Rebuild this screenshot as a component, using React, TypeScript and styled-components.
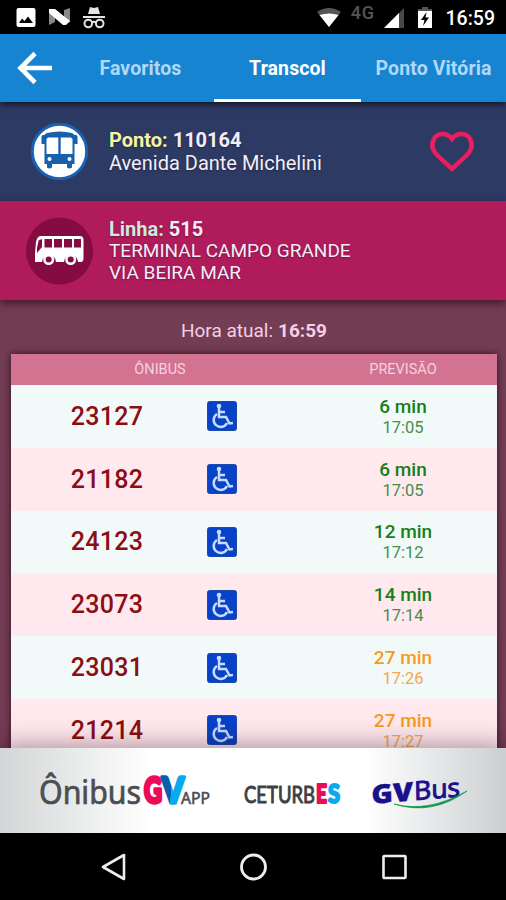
import React from 'react';
import styled, { createGlobalStyle } from 'styled-components';

const Global = createGlobalStyle`
  * { box-sizing: border-box; }
  body { margin: 0; background: #000; font-family: Roboto, sans-serif; overflow: hidden; }
  svg { display: block; flex: none; overflow: visible; }
`;

const Screen = styled.div`
  width: 506px;
  height: 900px;
  display: flex;
  flex-direction: column;
  overflow: hidden;
  background: #733d53;
`;

const StatusBar = styled.header`
  height: 34px;
  flex: none;
  background: #000;
  display: flex;
  align-items: center;
  justify-content: space-between;
  padding: 0 11px 0 16px;
`;

const IconGroup = styled.div<{ $gap: number }>`
  display: flex;
  align-items: center;
  gap: ${(p) => p.$gap}px;
`;

const Network = styled.span`
  color: #555;
  font-size: 18px;
  line-height: 18px;
  font-weight: 500;
  letter-spacing: 0.6px;
  padding-bottom: 9px;
  margin-left: 1px;
`;

const Battery = styled.svg`
  margin-left: 5px;
`;

const Clock = styled.span`
  color: #fff;
  font-size: 19.5px;
  font-weight: 500;
  margin-left: 5px;
  padding-top: 2px;
`;

const TabBar = styled.nav`
  height: 68px;
  flex: none;
  display: grid;
  grid-template-columns: 67px 147px 147px 145px;
  background: #1784d1;
  box-shadow: 0 2px 7px rgba(0, 0, 0, 0.75);
  z-index: 3;
`;

const BackButton = styled.button`
  border: 0;
  padding: 0 0 0 17px;
  background: none;
  display: flex;
  align-items: center;
`;

const Tab = styled.button<{ $active?: boolean }>`
  border: 0;
  border-bottom: 3px solid ${(p) => (p.$active ? '#fff' : 'transparent')};
  padding: 3px 0 0;
  background: none;
  font: 700 19.5px Roboto, sans-serif;
  letter-spacing: 0.1px;
  white-space: nowrap;
  color: ${(p) => (p.$active ? '#fff' : '#b0d8f8')};
`;

const Banner = styled.section<{ $tone: 'stop' | 'line' }>`
  height: 99px;
  flex: none;
  display: flex;
  align-items: center;
  padding: 0 32px 0 26px;
  background: ${(p) => (p.$tone === 'stop' ? '#2d3a64' : '#b01b5b')};
  box-shadow: ${(p) => (p.$tone === 'line' ? '0 3px 8px rgba(40, 10, 25, 0.75)' : 'none')};
  z-index: ${(p) => (p.$tone === 'line' ? 2 : 1)};
`;

const IconSlot = styled.div`
  width: 83px;
  flex: none;
`;

const BannerText = styled.div<{ $leading: number; $size: number }>`
  flex: 1;
  color: #f3edf8;
  font-size: ${(p) => p.$size}px;
  line-height: ${(p) => p.$leading}px;
  white-space: nowrap;
  text-shadow: 0 1px 2px rgba(0, 0, 0, 0.35);
`;

const BannerTitle = styled.div`
  font-weight: 700;
  font-size: 20px;
`;

const Label = styled.span<{ $color: string }>`
  color: ${(p) => p.$color};
`;

const Content = styled.main`
  flex: 1;
  min-height: 0;
  padding: 0 9px 0 11px;
  overflow: hidden;
`;

const CurrentTime = styled.div`
  height: 54px;
  padding: 7px 0 0;
  display: flex;
  align-items: center;
  justify-content: center;
  gap: 5px;
  color: #f5cfe4;
  font-size: 19px;
`;

const Table = styled.div`
  box-shadow: 0 0 7px rgba(25, 0, 10, 0.75);
`;

const HeaderRow = styled.div`
  height: 31px;
  display: grid;
  grid-template-columns: 298px 1fr;
  align-items: center;
  text-align: center;
  background: #d27391;
  color: #f8cfe0;
  font-size: 14.5px;
`;

const Row = styled.div`
  height: 62.8px;
  display: grid;
  grid-template-columns: 192px 106px 1fr;
  align-items: center;
  text-align: center;
  background: #f2faf9;
  &:nth-child(odd) { background: #ffe9ee; }
`;

const Vehicle = styled.span`
  color: #8c0d12;
  font-size: 25px;
  font-weight: 500;
  letter-spacing: 0.25px;
`;

const Center = styled.div`
  display: flex;
  padding-left: 4px;
`;

const Forecast = styled.div<{ $late: boolean }>`
  color: ${(p) => (p.$late ? '#f79a1d' : '#168018')};
  font-size: 16.5px;
  line-height: 21px;
  padding-top: 1px;
`;

const Minutes = styled.div`
  font-size: 19px;
  font-weight: 500;
`;

const Arrival = styled.div<{ $late: boolean }>`
  color: ${(p) => (p.$late ? '#f5a64a' : '#438e4c')};
`;

const Sponsors = styled.footer`
  height: 85px;
  flex: none;
  display: flex;
  align-items: center;
  padding-left: 38px;
  background: linear-gradient(90deg, #d3d5d6 0, #fff 150px, #fff 365px, #cccfd1 100%);
  box-shadow: 0 -2px 24px rgba(40, 0, 20, 0.42);
  z-index: 2;
`;

const NavBar = styled.nav`
  height: 67px;
  flex: none;
  background: #000;
  display: flex;
  align-items: center;
  padding-left: 100px;
  gap: 114px;
  z-index: 2;
`;

const StatusLeft = () => (
  <IconGroup $gap={12.5}>
    <svg width="20" height="20" viewBox="0 0 20 20">
      <rect x=".5" y="1" width="19" height="19" rx="2" fill="#fff" />
      <path d="M3 16L6 11.5L8.5 14L12 9.5L17 16Z" fill="#000" />
    </svg>
    <svg width="22" height="20" viewBox="0 0 22 20">
      <path d="M0 2L6 5V15L0 18ZM15 3L21 1V15L15 17Z" fill="#888" />
      <path d="M0 2H6L21 14L17 18H14L0 6Z" fill="#fff" />
    </svg>
    <svg width="22" height="22" viewBox="0 0 22 22" fill="none" stroke="#e4e4e4" strokeWidth="2">
      <path d="M5 8L7 1L11 2L15 1L17 8Z" fill="#e4e4e4" stroke="none" />
      <path d="M0 11H22" />
      <circle cx="5.3" cy="17.5" r="3.8" />
      <circle cx="16.7" cy="17.5" r="3.8" />
      <path d="M9 16.5Q11 15 13 16.5" />
    </svg>
  </IconGroup>
);

const StatusRight = () => (
  <IconGroup $gap={9}>
    <svg width="24" height="20" viewBox="0 0 24 20">
      <path d="M0 5Q12-3 24 5L12 20Z" fill="#555" />
      <path d="M2.500 8Q12 5 21.500 8L12 20Z" fill="#fff" />
    </svg>
    <Network>4G</Network>
    <svg width="20" height="20" viewBox="0 0 20 20">
      <path d="M0 21L20 1V21Z" fill="#484848" />
      <path d="M0 21L15 6V21Z" fill="#fff" />
    </svg>
    <Battery width="14" height="21" viewBox="0 0 14 21">
      <path d="M4 0H10V2H14V5H0V2H4Z" fill="#555" />
      <path d="M0 4H14V21H0Z" fill="#fff" />
      <path d="M8.500 5L3 13H6.500L5 19L11 10.500H7.500Z" fill="#000" />
    </Battery>
    <Clock>16:59</Clock>
  </IconGroup>
);

const BackArrow = () => (
  <svg width="35" height="32" viewBox="0 0 35 32" fill="none" stroke="#fff" strokeWidth="4.6">
    <path d="M18 1.5L3.5 16L18 30.5M3 16H35" />
  </svg>
);

const StopIcon = () => (
  <svg width="68" height="60" viewBox="0 0 68 60">
    <circle cx="33.5" cy="29.500" r="27.2" fill="#fff" stroke="#1763b2" strokeWidth="3" />
    <path d="M21 11Q33.500 8 46 11Q48 12 48.500 13H50.500Q52 14 51.500 17V22H48.500V42H46V45.500Q43.500 47.500 41 45.500V42H26V45.500Q23.500 47.500 21 45.500V42H18.500V22H15.500V17Q15 14 16.500 13H18.500Q19 12 21 11Z" fill="#1761ac" />
    <path d="M22 15.500H32.300V32H20.500V17ZM34.700 15.500H45L46.500 17V32H34.700Z" fill="#fff" />
    <circle cx="23.500" cy="37" r="2" fill="#fff" />
    <circle cx="43.500" cy="37" r="2" fill="#fff" />
  </svg>
);

const LineIcon = () => (
  <svg width="68" height="68" viewBox="0 0 68 68">
    <circle cx="33.500" cy="34" r="33.500" fill="#850b43" />
    <path d="M14 19H54Q57.500 19 57.500 23V42Q57 45 55 45H52A7 7 0 0 0 38 45H30A7 7 0 0 0 16 45H9V36L10 25Q11 20 14 19Z" fill="#fff" />
    <path d="M12.500 23.500L16 22V30L11 36V31ZM18.500 22H26V30.500H18.500ZM28 22H36V30.500H28ZM38 22H46V30.500H38ZM48 22H55V30.500H48Z" fill="#850b43" />
    <circle cx="22.700" cy="42.500" r="4.300" fill="#850b43" stroke="#fff" strokeWidth="2.500" />
    <circle cx="44.700" cy="42.500" r="4.300" fill="#850b43" stroke="#fff" strokeWidth="2.500" />
  </svg>
);

const Heart = () => (
  <svg width="44" height="40" viewBox="0 0 44 40" fill="none" stroke="#e91e5f" strokeWidth="4.500">
    <path d="M22 7C17 0 8 1 4.500 6C0 13 3 19 8 24L22 37L36 24C41 19 44 13 39.500 6C36 1 27 0 22 7Z" />
  </svg>
);

const Accessible = () => (
  <svg width="30" height="30" viewBox="0 0 30 30">
    <rect x=".5" y=".5" width="29" height="29" rx="2" fill="#0842c8" stroke="#1b4ba8" />
    <circle cx="12" cy="5" r="2.300" fill="#c8dcff" />
    <g fill="none" stroke="#c8dcff" strokeWidth="2.500">
      <path d="M12 6V16H19L22.500 22.500L26 22" />
      <path d="M12 11H18" />
      <path d="M10 13A7 7 0 1 0 20 22" />
    </g>
  </svg>
);

const AppLogo = () => (
  <svg width="174" height="48" viewBox="0 0 174 48">
    <defs>
      <linearGradient id="vee" x1="0" x2="1" y1="0" y2=".18">
        <stop offset=".5" stopColor="#075fae" />
        <stop offset=".51" stopColor="#08a9ef" />
      </linearGradient>
    </defs>
    <text x="1" y="37" textLength="102" lengthAdjust="spacingAndGlyphs" fontFamily="Noto Sans" fontSize="32" fill="#4b4e51" stroke="#4b4e51" strokeWidth=".7">Ônibus</text>
    <g fontFamily="Lato" fontWeight="900" fontSize="36" strokeWidth="3.600" strokeLinejoin="round">
      <text x="106" y="36" textLength="18" lengthAdjust="spacingAndGlyphs" fill="#ed0b58" stroke="#ed0b58">G</text>
      <text x="124" y="36" textLength="22" lengthAdjust="spacingAndGlyphs" fill="url(#vee)" stroke="url(#vee)">V</text>
    </g>
    <text x="143" y="37" textLength="29" lengthAdjust="spacingAndGlyphs" fontFamily="Noto Sans" fontSize="16" fill="#4b4e51" stroke="#4b4e51" strokeWidth=".6">APP</text>
  </svg>
);

const CeturbLogo = () => (
  <svg width="160" height="48" viewBox="0 0 160 48">
    <text x="32" y="36" textLength="71" lengthAdjust="spacingAndGlyphs" fontFamily="Lato" fontWeight="400" fontSize="23" fill="#3e4043" stroke="#3e4043" strokeWidth="1" strokeLinejoin="round">CETURB</text>
    <g fontFamily="Lato" fontWeight="900" fontSize="26" strokeWidth="2" strokeLinejoin="round">
      <text x="104" y="36" textLength="11" lengthAdjust="spacingAndGlyphs" fill="#ed0b58" stroke="#ed0b58">E</text>
      <text x="116" y="36" textLength="12" lengthAdjust="spacingAndGlyphs" fill="#0aaaf0" stroke="#0aaaf0">S</text>
    </g>
  </svg>
);

const GvBusLogo = () => (
  <svg width="96" height="48" viewBox="0 0 96 48">
    <g fill="#19108c" stroke="#19108c" strokeLinejoin="round" fontFamily="Open Sans" transform="rotate(-5 0 36) skewX(-4)">
      <text x="2" y="37" textLength="42" lengthAdjust="spacingAndGlyphs" fontSize="26" fontWeight="800" strokeWidth=".3">GV</text>
      <text x="45" y="37" textLength="46" lengthAdjust="spacingAndGlyphs" fontSize="26" fontWeight="500" strokeWidth="1">Bus</text>
    </g>
    <path d="M22 37Q56 46 95 24Q60 49 22 37Z" fill="#12964a" stroke="#12964a" strokeWidth=".7" />
  </svg>
);

const departures = [
  { vehicle: '23127', wait: '6 min', at: '17:05', late: false },
  { vehicle: '21182', wait: '6 min', at: '17:05', late: false },
  { vehicle: '24123', wait: '12 min', at: '17:12', late: false },
  { vehicle: '23073', wait: '14 min', at: '17:14', late: false },
  { vehicle: '23031', wait: '27 min', at: '17:26', late: true },
  { vehicle: '21214', wait: '27 min', at: '17:27', late: true },
];

export default function App() {
  return (
    <Screen>
      <Global />
      <StatusBar>
        <StatusLeft />
        <StatusRight />
      </StatusBar>
      <TabBar>
        <BackButton aria-label="Voltar"><BackArrow /></BackButton>
        <Tab>Favoritos</Tab>
        <Tab $active>Transcol</Tab>
        <Tab>Ponto Vitória</Tab>
      </TabBar>
      <Banner $tone="stop">
        <IconSlot><StopIcon /></IconSlot>
        <BannerText $leading={23} $size={20}>
          <BannerTitle><Label $color="#f6f3a4">Ponto:</Label> 110164</BannerTitle>
          Avenida Dante Michelini
        </BannerText>
        <Heart />
      </Banner>
      <Banner $tone="line">
        <IconSlot><LineIcon /></IconSlot>
        <BannerText $leading={22} $size={19}>
          <BannerTitle><Label $color="#cfe9df">Linha:</Label> 515</BannerTitle>
          TERMINAL CAMPO GRANDE<br />VIA BEIRA MAR
        </BannerText>
      </Banner>
      <Content>
        <CurrentTime>Hora atual: <b>16:59</b></CurrentTime>
        <Table>
          <HeaderRow><span>ÔNIBUS</span><span>PREVISÃO</span></HeaderRow>
          {departures.map((d) => (
            <Row key={d.vehicle}>
              <Vehicle>{d.vehicle}</Vehicle>
              <Center><Accessible /></Center>
              <Forecast $late={d.late}>
                <Minutes>{d.wait}</Minutes>
                <Arrival $late={d.late}>{d.at}</Arrival>
              </Forecast>
            </Row>
          ))}
        </Table>
      </Content>
      <Sponsors>
        <AppLogo />
        <CeturbLogo />
        <GvBusLogo />
      </Sponsors>
      <NavBar>
        <svg width="26" height="28" viewBox="0 0 26 28" fill="none" stroke="#eee" strokeWidth="2.600" strokeLinejoin="round">
          <path d="M24 2V26L3 14Z" />
        </svg>
        <svg width="28" height="28" viewBox="0 0 28 28" fill="none" stroke="#eee" strokeWidth="2.800">
          <circle cx="13.500" cy="14" r="12" />
        </svg>
        <svg width="26" height="26" viewBox="0 0 26 26" fill="none" stroke="#eee" strokeWidth="2.600">
          <rect x="1.500" y="2" width="22" height="22" rx=".8" />
        </svg>
      </NavBar>
    </Screen>
  );
}
